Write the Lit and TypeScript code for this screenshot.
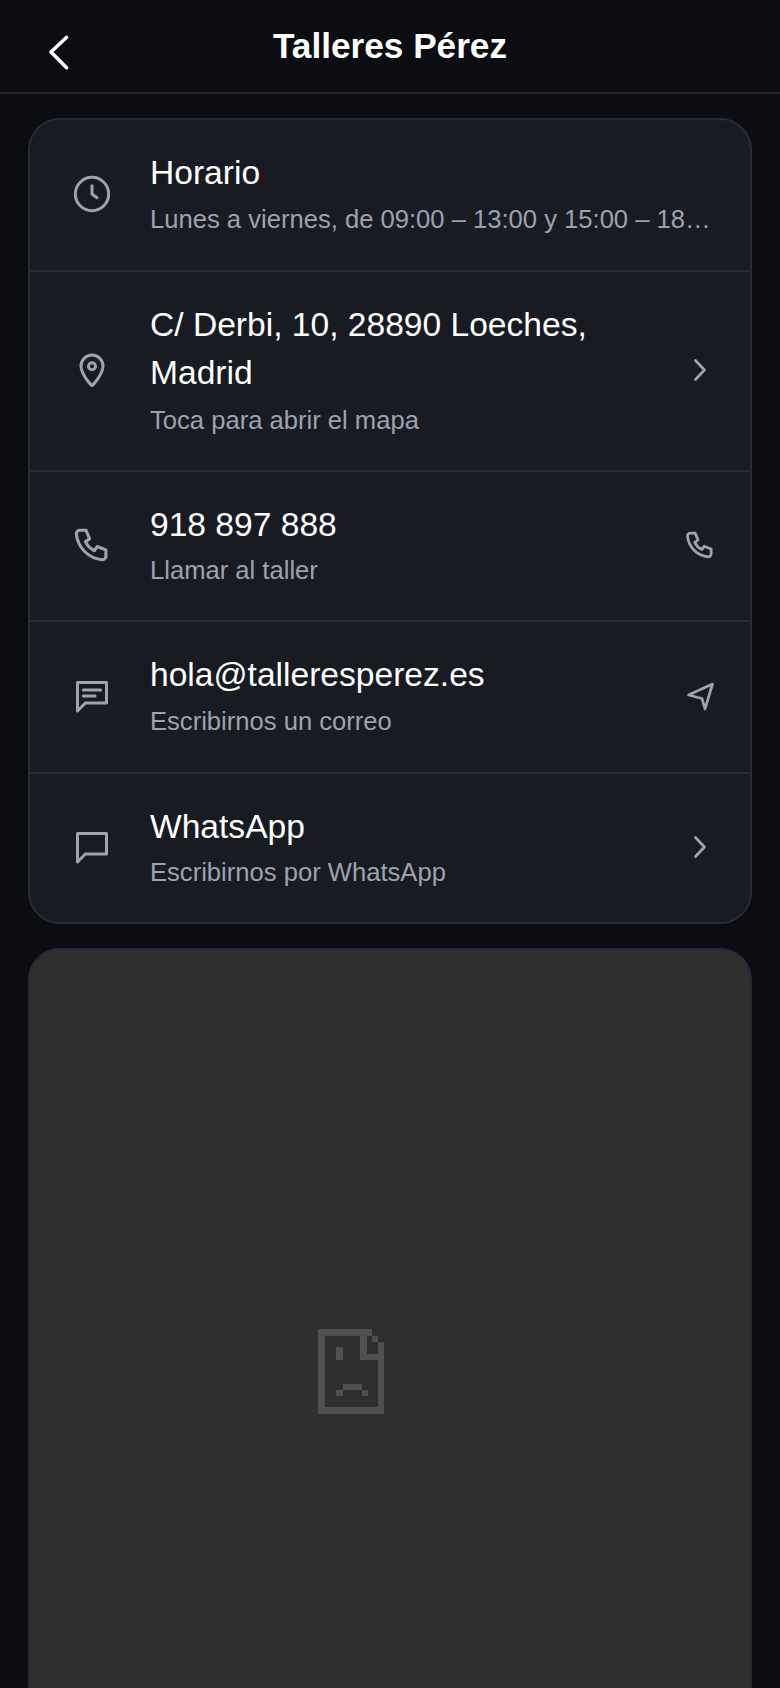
import { LitElement, html, css, svg } from 'lit';
import { customElement } from 'lit/decorators.js';

const icons = {
    clock: html`<svg viewBox="0 0 24 24"><circle cx="12" cy="12" r="10"></circle><path d="M12 7v5l3 2.200"></path></svg>`,
    pin: html`<svg viewBox="0 0 24 24"><path d="M12 21.300c-.4 0-6.600-6.800-6.600-11.700a6.600 6.600 0 0 1 13.200 0c0 4.900-6.200 11.700-6.600 11.700z"></path><circle cx="12" cy="9.700" r="2.100"></circle></svg>`,
    phone: html`<svg viewBox="0.500 0 23 23"><path d="M5 3h3.600l2 5-2.400 1.600a11 11 0 0 0 5.200 5.200l1.600-2.400 5 2v3.600a2 2 0 0 1-2 2A16.500 16.500 0 0 1 3 5a2 2 0 0 1 2-2z"></path></svg>`,
    message: html`<svg viewBox="0 0 24 24"><path d="M3.300 3.900h17.400v12.300H8l-4.700 4.800z"></path><path d="M6.800 8.400h10.400M6.800 12h7"></path></svg>`,
    bubble: html`<svg viewBox="0 0 24 24"><path d="M3.300 3.900h17.400v12.300H8l-4.700 4.800z"></path></svg>`,
    send: html`<svg class="large" viewBox="0 0 32 32"><path d="M28.500 4 4.500 15l13.500 3.500 3 10.500z"></path></svg>`,
    chevron: html`<svg class="large" viewBox="0 0 32 32"><path d="M11.500 6.500 20.500 16l-9 9.500"></path></svg>`,
};

const rows = [
    { icon: icons.clock, title: 'Horario', sub: 'Lunes a viernes, de 09:00 – 13:00 y 15:00 – 18:00', spacing: 'loose' },
    { icon: icons.pin, title: 'C/ Derbi, 10, 28890 Loeches, Madrid', sub: 'Toca para abrir el mapa', action: icons.chevron, spacing: 'wrapped' },
    { icon: icons.phone, title: '918 897 888', sub: 'Llamar al taller', action: icons.phone, spacing: '' },
    { icon: icons.message, title: 'hola@talleresperez.es', sub: 'Escribirnos un correo', action: icons.send, spacing: 'loose' },
    { icon: icons.bubble, title: 'WhatsApp', sub: 'Escribirnos por WhatsApp', action: icons.chevron, spacing: '' },
];

// broken page glyph, in px*3 of the reference
const brokenRects = [
    [0, 0, 162, 20], [0, 0, 20, 254], [0, 234, 197, 20], [179, 40, 18, 214],
    [125, 20, 20, 74], [125, 74, 72, 20], [162, 20, 18, 20],
    [55, 55, 19, 37], [74, 164, 58, 18], [55, 182, 19, 18], [132, 182, 18, 18],
];

@customElement('app-root')
export class AppRoot extends LitElement {

    static styles = css`
        :host {
            display: block;
            height: 1688px;
            overflow: hidden;
            background: #0b0d12;
            font-family: "Liberation Sans", Arial, sans-serif;
            color: #fff;
        }
        .header {
            display: grid;
            grid-template-columns: 1fr auto 1fr;
            height: 92px;
            border-bottom: 2px solid #25282f;
            align-items: center;
        }
        .title {
            font-size: 35.200px;
            font-weight: 700;
            line-height: 92px;
        }
        .back {
            margin: 11px 0 0 44px;
            width: 32px;
            height: 40px;
            display: block;
            fill: none;
            stroke: #fff;
            stroke-width: 3.500px;
            stroke-linecap: round;
            stroke-linejoin: round;
        }
        .content {
            padding: 24px 28px;
            display: flex;
            flex-direction: column;
            gap: 24px;
        }
        .card {
            background: #181b22;
            border: 2px solid #282b33;
            border-radius: 32px;
            overflow: hidden;
        }
        .row {
            display: flex;
            align-items: center;
            padding: 29px 34px 32px 42px;
            border-top: 2px solid #282b33;
        }
        .row:first-child {
            border-top: none;
        }
        .row.loose {
            padding-bottom: 33px;
        }
        .icon {
            flex: none;
            width: 40px;
            height: 40px;
            margin: 1px 38px 0 0;
        }
        .text {
            flex: 1;
            min-width: 0;
        }
        .row-title {
            font-size: 33.600px;
            line-height: 48px;
        }
        .row-sub {
            font-size: 25.600px;
            line-height: 36px;
            margin-top: 3px;
            color: #9ca3af;
            white-space: nowrap;
            overflow: hidden;
            text-overflow: ellipsis;
        }
        .loose .row-sub {
            margin-top: 4px;
        }
        .wrapped .row-sub {
            margin-top: 5px;
        }
        .action {
            flex: none;
            width: 32px;
            height: 32px;
            margin: 1px 0 0 24px;
        }
        svg {
            display: block;
            fill: none;
            stroke: #a0a3ab;
            stroke-width: 1.800;
            stroke-linecap: round;
            stroke-linejoin: round;
        }
        .icon svg, .action svg {
            width: 100%;
            height: 100%;
        }
        .action svg {
            stroke-width: 2;
        }
        .action svg.large {
            stroke-width: 2.700;
        }
        .frame {
            height: 800px;
            background: #2f2f2f;
            border: 2px solid #262a32;
            border-radius: 32px;
            padding: 379px 0 0 288px;
            box-sizing: border-box;
        }
        .frame svg {
            width: 66px;
            height: 85px;
            stroke: none;
            fill: #505050;
        }
    `;

    render() {
        return html`
            <div class="header">
                <svg class="back" viewBox="0 0 32 40"><path d="M22.600 5.300 7 20l15.600 15.700"></path></svg>
                <div class="title">Talleres Pérez</div>
            </div>
            <div class="content">
                <div class="card">
                    ${rows.map((row) => html`
                        <div class="row ${row.spacing}">
                            <div class="icon">${row.icon}</div>
                            <div class="text">
                                <div class="row-title">${row.title}</div>
                                <div class="row-sub">${row.sub}</div>
                            </div>
                            ${row.action ? html`<div class="action">${row.action}</div>` : ''}
                        </div>
                    `)}
                </div>
                <div class="frame">
                    <svg viewBox="0 0 197 254" shape-rendering="crispEdges">
                        ${brokenRects.map(([x, y, w, h]) => svg`<rect x=${x} y=${y} width=${w} height=${h}></rect>`)}
                    </svg>
                </div>
            </div>
        `;
    }
}
